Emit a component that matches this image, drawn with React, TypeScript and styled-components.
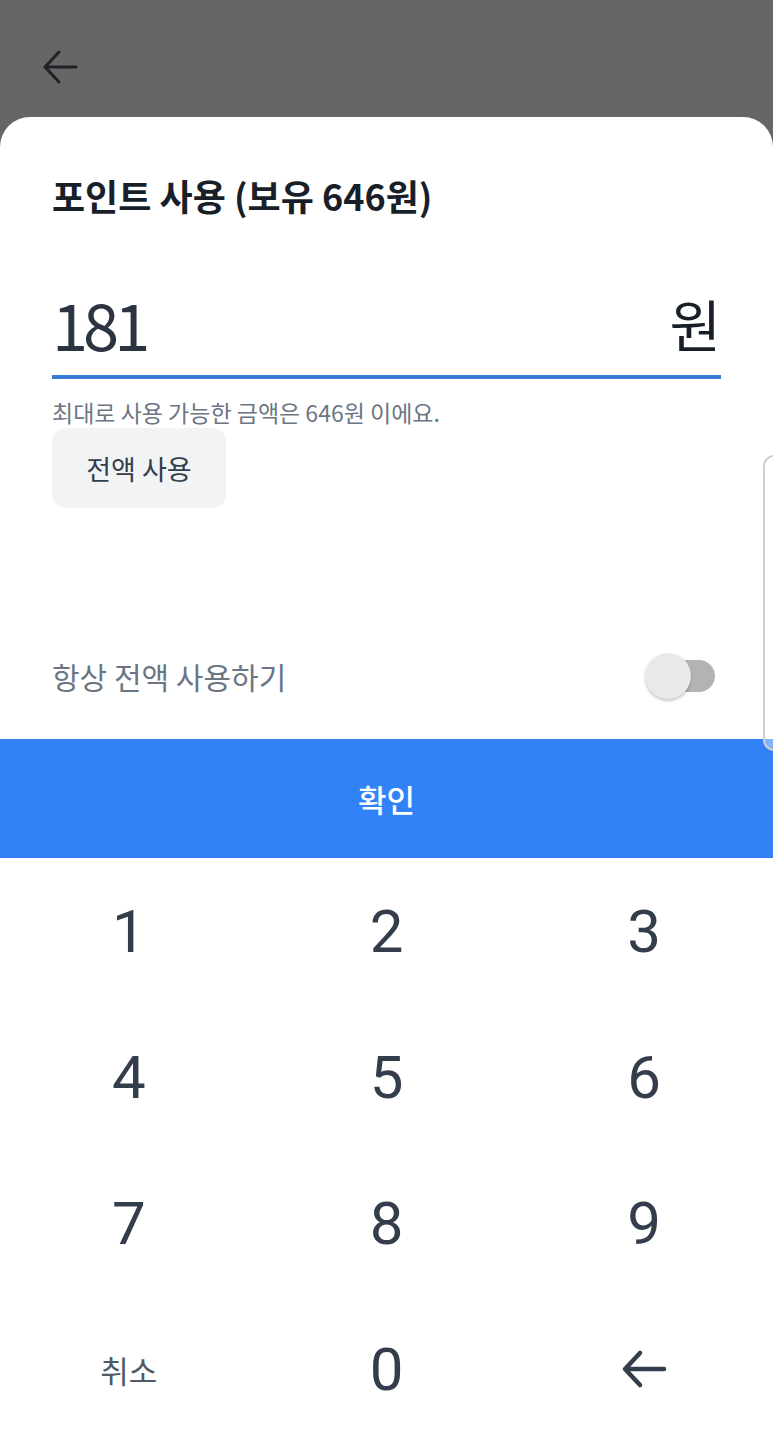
import React from 'react'
import styled, { createGlobalStyle } from 'styled-components'

const GlobalStyle = createGlobalStyle`
  * { box-sizing: border-box; }
  body {
    margin: 0;
    background: #ffffff;
    font-family: "Noto Sans CJK KR", "Noto Sans", sans-serif;
  }
`

const Page = styled.div`
  position: relative;
  width: 773px;
  height: 1430px;
  overflow: hidden;
  display: flex;
  flex-direction: column;
  background: #666666;
`

const Header = styled.header`
  height: 117px;
  flex-shrink: 0;
  display: flex;
  align-items: flex-start;
  padding: 49px 0 0 42px;
`

const Sheet = styled.section`
  flex: 1;
  display: flex;
  flex-direction: column;
  background: #ffffff;
  border-radius: 30px 30px 0 0;
`

const Content = styled.div`
  padding: 58px 52px 0;
  display: flex;
  flex-direction: column;
`

const Title = styled.h1`
  margin: 0;
  font-size: 36px;
  line-height: 40px;
  font-weight: 700;
  color: #191f28;
`

const AmountRow = styled.div`
  margin-top: 68px;
  display: flex;
  justify-content: space-between;
  align-items: center;
  padding-bottom: 12px;
  border-bottom: 4px solid #3a7bd5;
`

const Amount = styled.span`
  font-size: 65px;
  line-height: 80px;
  font-weight: 400;
  color: #2b3440;
  letter-spacing: -5px;
`

const Unit = styled.span`
  font-size: 56px;
  line-height: 80px;
  font-weight: 400;
  color: #191f28;
`

const Helper = styled.p`
  margin: 20px 0 0;
  font-size: 23px;
  line-height: 26px;
  color: #6b7684;
`

const ChipButton = styled.button`
  margin-top: 3px;
  width: 174px;
  height: 80px;
  border: none;
  border-radius: 14px;
  background: #f2f3f5;
  font-family: inherit;
  font-size: 27px;
  color: #333d4b;
  align-self: flex-start;
  padding: 0;
`

const ToggleRow = styled.div`
  margin-top: 138px;
  height: 60px;
  display: flex;
  align-items: center;
  justify-content: space-between;
  padding-right: 6px;
`

const ToggleLabel = styled.span`
  font-size: 30px;
  color: #6b7684;
`

const Switch = styled.div`
  position: relative;
  width: 70px;
  height: 46px;
  display: flex;
  align-items: center;
  justify-content: flex-end;
`

const Track = styled.div`
  width: 58px;
  height: 32px;
  border-radius: 16px;
  background: #b3b3b3;
`

const Knob = styled.div`
  position: absolute;
  left: 0;
  top: 0;
  width: 46px;
  height: 46px;
  border-radius: 50%;
  background: #e9e9e9;
  box-shadow: 0 2px 3px rgba(0, 0, 0, 0.22);
`

const ConfirmButton = styled.button`
  margin-top: 33px;
  height: 119px;
  width: 100%;
  flex-shrink: 0;
  border: none;
  background: #3182f6;
  color: #ffffff;
  font-family: inherit;
  font-size: 31px;
  font-weight: 500;
`

const Keypad = styled.div`
  display: grid;
  grid-template-columns: repeat(3, 1fr);
  grid-auto-rows: 146px;
`

const Key = styled.button<{ $small?: boolean }>`
  border: none;
  background: transparent;
  display: flex;
  align-items: center;
  justify-content: center;
  color: ${p => (p.$small ? '#4e5968' : '#333d4b')};
  font-family: ${p => (p.$small ? '"Noto Sans CJK KR", sans-serif' : 'Roboto, "Noto Sans", sans-serif')};
  font-size: ${p => (p.$small ? '31px' : '60px')};
  font-weight: 400;
  padding: 0;
`

const EdgeHandle = styled.div`
  position: absolute;
  right: -12px;
  top: 455px;
  width: 22px;
  height: 296px;
  border: 2px solid #cfcfcf;
  border-radius: 12px;
  background: rgba(255, 255, 255, 0.4);
`

const HeaderArrow = () => (
  <svg width="36" height="36" viewBox="0 0 36 36" fill="none">
    <path d="M34 18H3M17 3L3 18l14 15" stroke="#1e2227" strokeWidth={3} strokeLinecap="round" strokeLinejoin="round" />
  </svg>
)

const DeleteArrow = () => (
  <svg width="48" height="42" viewBox="0 0 48 42" fill="none">
    <path d="M44 21H6M20 5L5 21l15 16" stroke="#333d4b" strokeWidth={4.5} strokeLinecap="round" strokeLinejoin="round" />
  </svg>
)

const keys = ['1', '2', '3', '4', '5', '6', '7', '8', '9']

function App() {
  return (
    <Page>
      <GlobalStyle />
      <Header>
        <HeaderArrow />
      </Header>
      <Sheet>
        <Content>
          <Title>포인트 사용 (보유 646원)</Title>
          <AmountRow>
            <Amount>181</Amount>
            <Unit>원</Unit>
          </AmountRow>
          <Helper>최대로 사용 가능한 금액은 646원 이에요.</Helper>
          <ChipButton>전액 사용</ChipButton>
          <ToggleRow>
            <ToggleLabel>항상 전액 사용하기</ToggleLabel>
            <Switch>
              <Track />
              <Knob />
            </Switch>
          </ToggleRow>
        </Content>
        <ConfirmButton>확인</ConfirmButton>
        <Keypad>
          {keys.map(k => (
            <Key key={k}>{k}</Key>
          ))}
          <Key $small>취소</Key>
          <Key>0</Key>
          <Key>
            <DeleteArrow />
          </Key>
        </Keypad>
      </Sheet>
      <EdgeHandle />
    </Page>
  )
}

export default App
